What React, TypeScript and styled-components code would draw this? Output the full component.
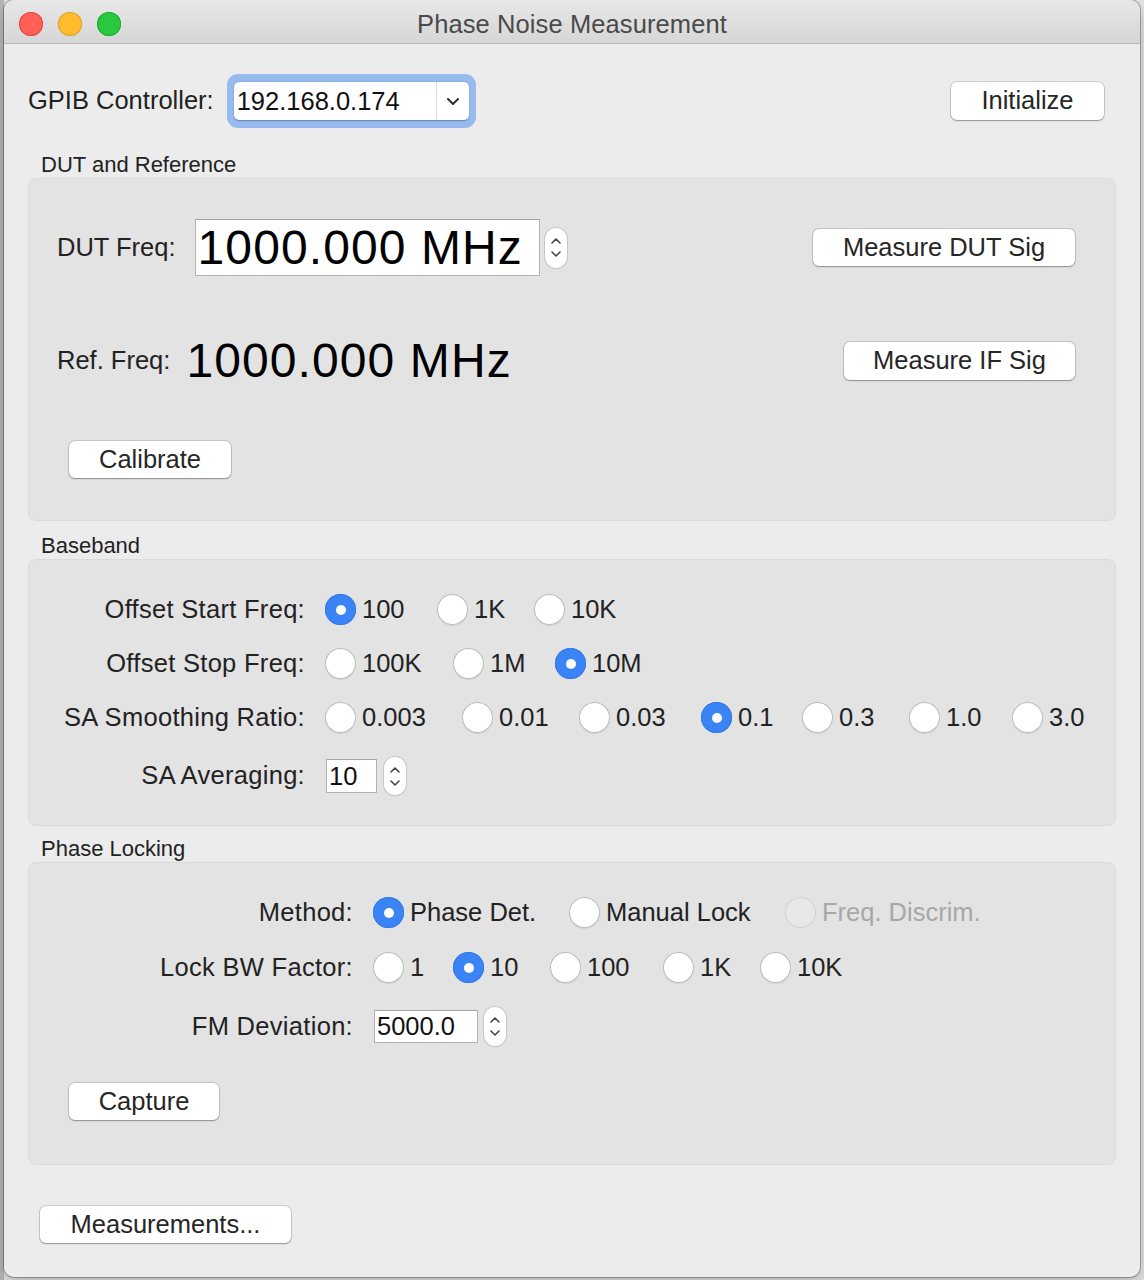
import React from 'react';
import styled, { createGlobalStyle } from 'styled-components';

const Global = createGlobalStyle`
  html, body { margin: 0; padding: 0; }
  body {
    background: #cfcfcf;
    font-family: "Liberation Sans", Arial, Helvetica, sans-serif;
    color: #222;
    width: 1144px;
    height: 1280px;
    overflow: hidden;
  }
  * { box-sizing: border-box; }
`;

const Desktop = styled.div`
  width: 1144px;
  height: 1280px;
  padding-left: 4px;
  display: flex;
  align-items: flex-start;
  background: linear-gradient(90deg, #b9b9b9 0 4px, #e6e6e6 4px);
`;

const Window = styled.div`
  width: 1136px;
  height: 1277px;
  background: #ececec;
  border-radius: 10px;
  overflow: hidden;
  box-shadow: 0 0 0 1px rgba(0, 0, 0, 0.28), 0 6px 18px rgba(0, 0, 0, 0.25);
  display: flex;
  flex-direction: column;
`;

const TitleBar = styled.div`
  height: 44px;
  padding-top: 5px;
  flex: none;
  display: grid;
  grid-template-columns: 1fr auto 1fr;
  align-items: center;
  background: linear-gradient(#e9e8e9, #d7d6d7);
  border-bottom: 1px solid #b7b7b7;
`;

const Lights = styled.div`
  display: flex;
  gap: 15px;
  padding-left: 15px;
`;

const Light = styled.span<{ $c: string; $b: string }>`
  width: 24px;
  height: 24px;
  border-radius: 50%;
  background: ${(p) => p.$c};
  box-shadow: inset 0 0 0 1px ${(p) => p.$b};
`;

const Title = styled.div`
  font-size: 25.5px;
  color: #4a4a4a;
  letter-spacing: 0.1px;
`;

const Content = styled.div`
  padding: 30px 24px 0 24px;
  display: flex;
  flex-direction: column;
`;

const HeaderRow = styled.div`
  height: 54px;
  display: flex;
  align-items: center;
  padding-right: 12px;
`;

const Label = styled.span`
  font-size: 25.5px;
  color: #222;
  white-space: nowrap;
  line-height: 1;
`;

const HeaderLabel = styled(Label)`
  margin-right: 13px;
`;

const Spacer = styled.div`
  flex: 1;
`;

const FocusRing = styled.div`
  padding: 8px 7px;
  border-radius: 11px;
  background: #97bbef;
  display: flex;
`;

const Select = styled.div`
  width: 235px;
  height: 38px;
  background: #fff;
  border-radius: 5px;
  display: flex;
  box-shadow: 0 0.5px 1.5px rgba(0, 0, 0, 0.3);
`;

const SelectValue = styled.div`
  flex: 1;
  padding-left: 3px;
  display: flex;
  align-items: center;
  font-size: 25.5px;
  color: #111;
`;

const SelectArrow = styled.div`
  width: 33px;
  border-left: 1px solid #dedede;
  display: flex;
  align-items: center;
  justify-content: center;
`;

const Button = styled.button<{ $w: number; $h?: number }>`
  width: ${(p) => p.$w}px;
  height: ${(p) => p.$h ?? 37}px;
  flex: none;
  padding: 0;
  border: none;
  border-radius: 6px;
  background: #fff;
  font-family: inherit;
  font-size: 25.5px;
  color: #262626;
  line-height: 1;
  box-shadow: 0 0 0 1px rgba(0, 0, 0, 0.13), 0 1px 1.5px rgba(0, 0, 0, 0.28);
`;

const SectionTitle = styled.div<{ $mt: number }>`
  margin-top: ${(p) => p.$mt}px;
  height: 27px;
  line-height: 27px;
  padding-left: 13px;
  font-size: 22px;
  color: #222;
`;

const GroupBox = styled.div<{ $pt: number; $pb: number }>`
  background: #e3e3e3;
  border: 1px solid #dadada;
  border-radius: 8px;
  padding: ${(p) => p.$pt}px 0 ${(p) => p.$pb}px 0;
  display: flex;
  flex-direction: column;
`;

const FreqRow = styled.div<{ $h: number; $mt?: number }>`
  height: ${(p) => p.$h}px;
  margin-top: ${(p) => p.$mt ?? 0}px;
  display: flex;
  align-items: center;
  padding: 0 40px 0 28px;
`;

const BigField = styled.div`
  width: 345px;
  height: 57px;
  margin-left: 19px;
  background: #fff;
  border: 1px solid #b2b2b2;
  border-top-color: #a4a4a4;
  display: flex;
  align-items: center;
  padding-left: 2px;
  font-size: 48px;
  letter-spacing: 1.1px;
  color: #000;
`;

const BigValue = styled.div`
  margin-left: 16px;
  font-size: 48px;
  letter-spacing: 1.1px;
  color: #000;
  line-height: 1;
`;

const ButtonRow = styled.div<{ $mt: number; $pl: number }>`
  margin-top: ${(p) => p.$mt}px;
  padding-left: ${(p) => p.$pl}px;
  display: flex;
`;

const Stepper = styled.div<{ $h: number; $ml: number }>`
  width: 22px;
  height: ${(p) => p.$h}px;
  margin-left: ${(p) => p.$ml}px;
  flex: none;
  border-radius: 11px;
  background: #fff;
  box-shadow: 0 0 0 1px #c6c6c6, 0 1px 1px rgba(0, 0, 0, 0.12);
  display: flex;
  flex-direction: column;
  align-items: center;
  justify-content: center;
  gap: 7px;
`;

const FormGrid = styled.div<{ $lw: number }>`
  display: grid;
  grid-template-columns: ${(p) => p.$lw}px 1fr;
  column-gap: 20px;
  align-items: center;
`;

const FormLabel = styled(Label)<{ $mt?: number }>`
  text-align: right;
  margin-top: ${(p) => p.$mt ?? 0}px;
  letter-spacing: 0.3px;
`;

const Controls = styled.div<{ $h: number; $mt?: number }>`
  height: ${(p) => p.$h}px;
  margin-top: ${(p) => p.$mt ?? 0}px;
  display: flex;
  align-items: center;
`;

const Option = styled.div<{ $w?: number }>`
  width: ${(p) => (p.$w ? `${p.$w}px` : 'auto')};
  flex: none;
  display: flex;
  align-items: center;
  gap: 6px;
`;

const RadioDot = styled.span<{ $checked?: boolean; $disabled?: boolean }>`
  width: 31px;
  height: 31px;
  flex: none;
  border-radius: 50%;
  display: flex;
  align-items: center;
  justify-content: center;
  background: ${(p) => (p.$checked ? '#3a84f6' : p.$disabled ? '#e8e8e8' : '#fff')};
  box-shadow: ${(p) =>
    p.$checked
      ? 'inset 0 0 0 1px #3479e8'
      : p.$disabled
      ? 'inset 0 0 0 1px #d2d2d2'
      : 'inset 0 0 0 1px #b9b9b9, 0 1px 1px rgba(0,0,0,0.08)'};
  &::after {
    content: '';
    display: ${(p) => (p.$checked ? 'block' : 'none')};
    width: 10px;
    height: 10px;
    border-radius: 50%;
    background: #fff;
  }
`;

const OptionText = styled.span<{ $disabled?: boolean }>`
  font-size: 25.5px;
  line-height: 1;
  color: ${(p) => (p.$disabled ? '#a7a7a7' : '#222')};
  white-space: nowrap;
`;

const SmallField = styled.div<{ $w: number; $h: number }>`
  width: ${(p) => p.$w}px;
  height: ${(p) => p.$h}px;
  margin-left: 1px;
  flex: none;
  background: #fff;
  border: 1px solid #b2b2b2;
  border-top-color: #a4a4a4;
  display: flex;
  align-items: center;
  padding-left: 2px;
  font-size: 25.5px;
  color: #111;
`;

const BottomRow = styled.div`
  margin-top: 41px;
  padding-left: 12px;
  display: flex;
`;

const ChevronDown = () => (
  <svg width={12} height={7} viewBox="0 0 12 7" fill="none">
    <path d="M1 1 L6 6 L11 1" stroke="#333" strokeWidth={2} strokeLinecap="round" strokeLinejoin="round" />
  </svg>
);

const StepArrows = () => (
  <>
    <svg width="10" height="6" viewBox="0 0 10 6" fill="none">
      <path d="M1 5 L5 1 L9 5" stroke="#444" strokeWidth="1.6" strokeLinecap="round" strokeLinejoin="round" />
    </svg>
    <svg width="10" height="6" viewBox="0 0 10 6" fill="none">
      <path d="M1 1 L5 5 L9 1" stroke="#444" strokeWidth="1.6" strokeLinecap="round" strokeLinejoin="round" />
    </svg>
  </>
);

type Opt = { l: string; w?: number; c?: boolean; d?: boolean };

const RadioRow = ({ opts, mt }: { opts: Opt[]; mt?: number }) => (
  <Controls $h={31} $mt={mt}>
    {opts.map((o) => (
      <Option key={o.l} $w={o.w}>
        <RadioDot $checked={o.c} $disabled={o.d} />
        <OptionText $disabled={o.d}>{o.l}</OptionText>
      </Option>
    ))}
  </Controls>
);

export default function App() {
  return (
    <>
      <Global />
      <Desktop>
        <Window>
          <TitleBar>
            <Lights>
              <Light $c="#fe5f57" $b="#e1463f" />
              <Light $c="#febc2e" $b="#dfa023" />
              <Light $c="#2ac840" $b="#1eaa2c" />
            </Lights>
            <Title>Phase Noise Measurement</Title>
            <div />
          </TitleBar>
          <Content>
            <HeaderRow>
              <HeaderLabel>GPIB Controller:</HeaderLabel>
              <FocusRing>
                <Select>
                  <SelectValue>192.168.0.174</SelectValue>
                  <SelectArrow>
                    <ChevronDown />
                  </SelectArrow>
                </Select>
              </FocusRing>
              <Spacer />
              <Button $w={153} $h={38}>Initialize</Button>
            </HeaderRow>

            <SectionTitle $mt={23}>DUT and Reference</SectionTitle>
            <GroupBox $pt={40} $pb={42}>
              <FreqRow $h={57}>
                <Label>DUT Freq:</Label>
                <BigField>1000.000 MHz</BigField>
                <Stepper $h={40} $ml={5}>
                  <StepArrows />
                </Stepper>
                <Spacer />
                <Button $w={262}>Measure DUT Sig</Button>
              </FreqRow>
              <FreqRow $h={58} $mt={56}>
                <Label>Ref. Freq:</Label>
                <BigValue>1000.000 MHz</BigValue>
                <Spacer />
                <Button $w={231} $h={38}>Measure IF Sig</Button>
              </FreqRow>
              <ButtonRow $mt={51} $pl={40}>
                <Button $w={162}>Calibrate</Button>
              </ButtonRow>
            </GroupBox>

            <SectionTitle $mt={11}>Baseband</SectionTitle>
            <GroupBox $pt={34} $pb={30}>
              <FormGrid $lw={276}>
                <FormLabel>Offset Start Freq:</FormLabel>
                <RadioRow
                  opts={[
                    { l: '100', w: 112, c: true },
                    { l: '1K', w: 97 },
                    { l: '10K' },
                  ]}
                />
                <FormLabel $mt={23}>Offset Stop Freq:</FormLabel>
                <RadioRow
                  mt={23}
                  opts={[
                    { l: '100K', w: 128 },
                    { l: '1M', w: 102 },
                    { l: '10M', c: true },
                  ]}
                />
                <FormLabel $mt={23}>SA Smoothing Ratio:</FormLabel>
                <RadioRow
                  mt={23}
                  opts={[
                    { l: '0.003', w: 137 },
                    { l: '0.01', w: 117 },
                    { l: '0.03', w: 122 },
                    { l: '0.1', w: 101, c: true },
                    { l: '0.3', w: 107 },
                    { l: '1.0', w: 103 },
                    { l: '3.0' },
                  ]}
                />
                <FormLabel $mt={24}>SA Averaging:</FormLabel>
                <Controls $h={38} $mt={24}>
                  <SmallField $w={51} $h={34}>10</SmallField>
                  <Stepper $h={38} $ml={7}>
                    <StepArrows />
                  </Stepper>
                </Controls>
              </FormGrid>
            </GroupBox>

            <SectionTitle $mt={9}>Phase Locking</SectionTitle>
            <GroupBox $pt={34} $pb={44}>
              <FormGrid $lw={324}>
                <FormLabel>Method:</FormLabel>
                <RadioRow
                  opts={[
                    { l: 'Phase Det.', w: 196, c: true },
                    { l: 'Manual Lock', w: 216 },
                    { l: 'Freq. Discrim.', d: true },
                  ]}
                />
                <FormLabel $mt={24}>Lock BW Factor:</FormLabel>
                <RadioRow
                  mt={24}
                  opts={[
                    { l: '1', w: 80 },
                    { l: '10', w: 97, c: true },
                    { l: '100', w: 113 },
                    { l: '1K', w: 97 },
                    { l: '10K' },
                  ]}
                />
                <FormLabel $mt={24}>FM Deviation:</FormLabel>
                <Controls $h={39} $mt={24}>
                  <SmallField $w={104} $h={33}>5000.0</SmallField>
                  <Stepper $h={39} $ml={6}>
                    <StepArrows />
                  </Stepper>
                </Controls>
              </FormGrid>
              <ButtonRow $mt={37} $pl={40}>
                <Button $w={150}>Capture</Button>
              </ButtonRow>
            </GroupBox>

            <BottomRow>
              <Button $w={251}>Measurements...</Button>
            </BottomRow>
          </Content>
        </Window>
      </Desktop>
    </>
  );
}
